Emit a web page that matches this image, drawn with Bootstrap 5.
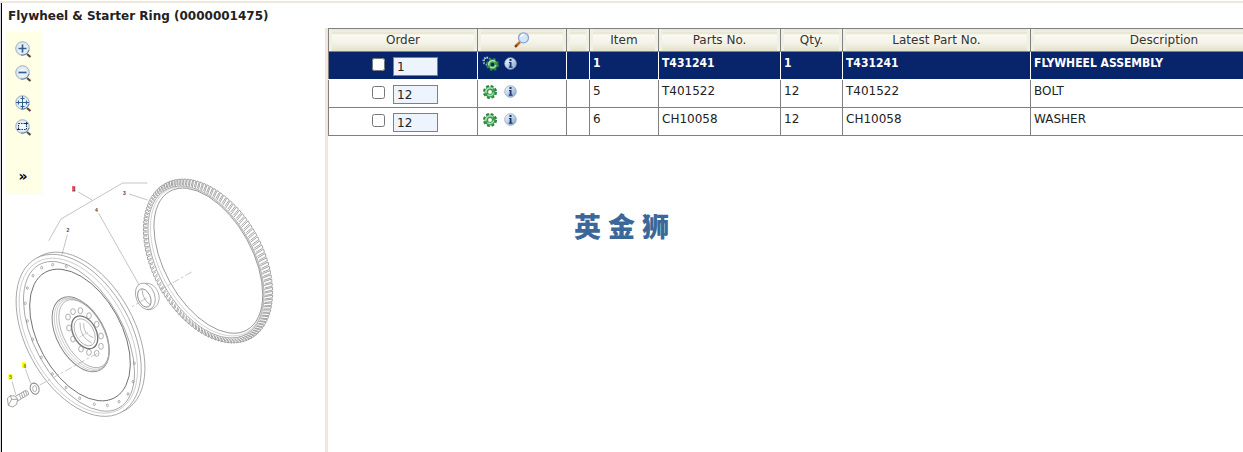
<!DOCTYPE html>
<html lang="en">
<head>
<meta charset="utf-8">
<meta name="viewport" content="width=device-width, initial-scale=1">
<title>Flywheel &amp; Starter Ring</title>
<link href="https://cdn.jsdelivr.net/npm/bootstrap@5.3.0/dist/css/bootstrap.min.css" rel="stylesheet">
<style>
body{font-family:"DejaVu Sans",Verdana,sans-serif;font-size:12px;line-height:16px;color:#222;background:#fff}
.page-shell{border-top:2px solid #efe8d6;margin-top:1px}
.frame-edge{border-left:1px solid #d8d8e0}
.frame-line{border-left:1px solid #000}
.page-title{font-size:12px;line-height:16px;padding:5px 6px 4px}
.diagram-pane{flex:0 0 323px}
.tool-strip{width:44px;padding:3px 3px 3px 4px;border:1px solid #fffff4;border-left:0}
.tool-list{background:#ffffe6;height:162px;padding:5px 0 0}
.tool-list button{width:34px;height:24px;padding:0;border:0;background:none;display:flex;align-items:center;justify-content:center;color:#000}
.tool-list .fit{margin-top:6px}
.tool-list .more{margin-top:25px;font-size:14px;font-weight:700;line-height:16px}
.splitter{flex:0 0 3px;background:#efe8d6}
.drawing{top:142px;left:-2px;width:323px}
.parts{table-layout:fixed;width:970px;border-collapse:collapse;margin:0}
.parts th,.parts td{border:1px solid #808080}
.parts th{height:23px;padding:0;text-align:center;font-weight:400;background:linear-gradient(#eeedde,#eeedde 3px,#e3e2cc 3px,#e3e2cc 4px,#fbfaf3 5px,#f4f3e8 60%,#e3e1ca);color:#333;box-shadow:inset 3px 0 #f1f0e4,inset -3px 0 #f1f0e4}
.parts td{height:28px;padding:3px;vertical-align:top}
.parts tbody tr:first-child td{background:#08246b;color:#fff;font-family:"DejaVu Sans Condensed","Noto Sans",sans-serif;font-weight:700;border-color:#fff;border-top-color:#808080}
.parts tbody tr:first-child td:first-child{border-left-color:#808080}
.parts td.order{padding:5px 0 0 43px}
.parts td.tools{padding:4px 0 0 4px}
.parts input[type=checkbox]{width:13px;height:13px;margin:1px 8px 0 0}
.qty{width:45px;height:19px;border:1px solid #808080;background:#edf4fe;padding:1px 3px 0;font:12px "DejaVu Sans",sans-serif;color:#222}
.icon-btn{border:0;padding:0;background:none;line-height:0}
.watermark{font:900 27px/30px "Noto Sans CJK SC",sans-serif;color:#3b6899;gap:7px;pointer-events:none}
</style>
</head>
<body class="vh-100 overflow-hidden d-flex flex-column">
<svg width="0" height="0" class="position-absolute" aria-hidden="true">
<defs>
<radialGradient id="glass"><stop offset="0" stop-color="#fff"/><stop offset="1" stop-color="#d5e3f0"/></radialGradient>
<linearGradient id="ball" x2="1" y2="1"><stop offset="0" stop-color="#fff"/><stop offset="1" stop-color="#7fa2cc"/></linearGradient>
<symbol id="lens" viewBox="0 0 17 17"><path d="M12 13l3.5 3" stroke="#544a43" stroke-width="2.2"/><circle cx="7.5" cy="7.5" r="6.8" fill="url(#glass)" stroke="#a3b0be"/><path d="M14 9a7 7 0 0 1-8 5" fill="none" stroke="#5f86ac"/></symbol>
<symbol id="gear" viewBox="0 0 14 14"><circle cx="7" cy="7" r="5.5" fill="none" stroke="#2c7d3e" stroke-width="3" stroke-dasharray="2.6 1.72"/><circle cx="7" cy="7" r="3.7" fill="none" stroke="#3d9a50" stroke-width="3.6"/><path d="M3 8a4.200 4.200 0 0 1 7-4M4.500 9.500a3.500 3.500 0 0 0 6-2" fill="none" stroke="#a4e3a6" stroke-width="1.5"/></symbol>
<symbol id="info" viewBox="0 0 13 13"><circle cx="6.5" cy="6.5" r="5.8" fill="url(#ball)" stroke="#8ca6c8" stroke-width=".8"/><path d="M5.500 2h2v2h-2zM5 5h2.500v4.500h1v1.200H4.800V9.500h.9V6H5z" fill="#17366d"/></symbol>
</defs>
</svg>
<div class="page-shell flex-grow-1 d-flex flex-column"><div class="frame-edge flex-grow-1 d-flex flex-column"><main class="frame-line flex-grow-1 d-flex flex-column">
<h1 class="page-title fw-bold m-0">Flywheel &amp; Starter Ring (0000001475)</h1>
<div class="d-flex flex-grow-1">
<section class="diagram-pane position-relative">
<div class="tool-strip"><div class="tool-list">
<button type="button" aria-label="Zoom in"><svg width="17" height="17"><use href="#lens"/><path d="M3.500 7.500h8M7.500 3.500v8" stroke="#31608e" stroke-width="1.7"/></svg></button>
<button type="button" aria-label="Zoom out"><svg width="17" height="17"><use href="#lens"/><path d="M3.500 7.500h8" stroke="#31608e" stroke-width="1.7"/></svg></button>
<button type="button" aria-label="Fit" class="fit"><svg width="17" height="17"><use href="#lens"/><path d="M1 7.500h13M7.500 1v13M3.500 5.500v4M11.500 5.500v4M5.500 3.500h4M5.500 11.500h4" stroke="#31608e"/></svg></button>
<button type="button" aria-label="Zoom area"><svg width="17" height="17"><use href="#lens"/><path d="M3.500 4.500h8v6h-8z" fill="none" stroke="#183665" stroke-dasharray="1.5 1"/><path d="M2 10.500h3M11.500 3v3M10 4.500h3" stroke="#183665"/></svg></button>
<button type="button" class="more" aria-label="More">»</button>
</div></div>
<svg class="drawing position-absolute pe-none" viewBox="0 0 969 846" fill="none" stroke="#8a8a8a" stroke-width="2" role="img" aria-label="Exploded view of flywheel and ring">
<g stroke="#b8b8b8" stroke-width="2.5"><path d="M146 212L183 147L368 39H442M235 66L278 91M387 72L443 90M296 130L417 344M202 194L186 254M36 634L48 676M76 596L92 640"/></g>
<g id="ring">
<path id="teeth" stroke="#777"/>
<ellipse cx="618" cy="276" rx="248" ry="144" transform="rotate(61 618 276)"/>
<ellipse cx="621" cy="274" rx="244" ry="139" stroke="#c4c4c4" transform="rotate(61 621 274)"/>
<ellipse cx="625" cy="272" rx="238" ry="132" stroke="#777" transform="rotate(61 625 272)"/>
</g>
<g id="collar"><path d="M436 340C465 336 485 374 475 397C470 413 455 422 440 418"/><ellipse cx="436" cy="379" rx="28" ry="41" transform="rotate(-20 436 379)"/><ellipse cx="433" cy="384" rx="18" ry="29" stroke="#666" transform="rotate(-24 433 384)"/><path d="M426 359Q429 391 452 405"/></g>
<g id="wheel">
<ellipse cx="249" cy="489" rx="264" ry="154" transform="rotate(61 249 489)" stroke="#888"/>
<ellipse cx="236" cy="496" rx="264" ry="157" transform="rotate(61 236 496)" fill="#fff"/>
<ellipse cx="235" cy="497" rx="253" ry="147" transform="rotate(61 235 497)" stroke="#bbb"/>
<ellipse cx="237" cy="499" rx="246" ry="133" transform="rotate(61 237 499)"/>
<ellipse cx="240" cy="495" rx="215" ry="125" transform="rotate(61 240 495)" stroke="#666" stroke-width="2.5"/>
<ellipse cx="242" cy="493" rx="122" ry="71" transform="rotate(61 242 493)" stroke="#888" stroke-width="3"/>
<ellipse cx="245" cy="493" rx="119" ry="67" transform="rotate(61 245 493)" stroke="#bbb"/>
<ellipse cx="248" cy="492" rx="116" ry="63" transform="rotate(61 248 492)" stroke="#bbb"/>
<ellipse cx="252" cy="491" rx="112" ry="60" transform="rotate(61 252 491)" stroke="#999"/>
<ellipse cx="254" cy="487" rx="53" ry="34" transform="rotate(61 254 487)" stroke="#777" stroke-width="4"/>
<ellipse cx="254" cy="487" rx="44" ry="27" transform="rotate(61 254 487)" stroke="#999"/>
<path d="M240 458Q238 500 275 519M251 460Q249 492 280 503" stroke="#999"/><path d="M238 502L264 487" stroke="#bbb"/>
<g id="holes"></g>
</g>
<path d="M575 306L477 362M440 384L396 410M292 550L107 652" stroke="#aaa" stroke-dasharray="22 7 8 7"/>
<ellipse cx="104" cy="656" rx="13" ry="17" transform="rotate(-20 104 656)" stroke="#888" stroke-width="3" fill="#fff"/><ellipse cx="104" cy="656" rx="6" ry="9"/>
<path d="M22 685L31 677L45 678L53 688L50 703L38 711L25 706ZM31 677L35 688L25 706M35 688L53 688M48 678L77 661Q86 663 86 673L53 693M58 673L63 686M64 670L69 683M70 666L75 679M76 663L81 675" stroke="#777" fill="#fff"/>
<g stroke="none"><path d="M216 48h10v17h-10z" fill="#ff6470"/><path d="M66 577h12v17h-12zM25 613h12v16h-12z" fill="#ffff00"/></g>
<g stroke="none" fill="#444" font-family="Liberation Sans, sans-serif" font-size="15" font-weight="700" text-anchor="middle"><text x="222" y="63">1</text><text x="373" y="76">3</text><text x="289" y="127">4</text><text x="204" y="186">2</text><text x="75" y="594" fill="#887800">6</text><text x="32" y="628" fill="#887800">5</text></g>
</svg>
</section>
<div class="splitter"></div>
<section class="flex-grow-1 overflow-hidden">
<table class="parts">
<colgroup><col style="width:149px"><col style="width:89px"><col style="width:23px"><col style="width:69px"><col style="width:122px"><col style="width:62px"><col style="width:188px"><col></colgroup>
<thead><tr><th>Order</th><th><svg width="16" height="16" aria-label="Search"><path d="M1.500 14.500L6 10" stroke="#c56a25" stroke-width="2.6"/><path d="M1 15l2-2" stroke="#713c18" stroke-width="2"/><circle cx="9.500" cy="5.800" r="5" fill="#d5e6fb" stroke="#8aa4d4" stroke-width="1.3"/><path d="M7 5a3 3 0 0 1 3-2.500" stroke="#fff" stroke-width="1.5" fill="none"/></svg></th><th></th><th>Item</th><th>Parts No.</th><th>Qty.</th><th>Latest Part No.</th><th>Description</th></tr></thead>
<tbody id="rows"></tbody>
</table>
</section>
</div>
</main></div></div>
<div class="watermark d-flex position-absolute top-50 start-50 translate-middle" lang="zh"><span>英</span><span>金</span><span>狮</span></div>
<script src="https://cdn.jsdelivr.net/npm/bootstrap@5.3.0/dist/js/bootstrap.bundle.min.js"></script>
<script>
const parts=[[1,'T431241',1,'FLYWHEEL ASSEMBLY'],[5,'T401522',12,'BOLT'],[6,'CH10058',12,'WASHER']];
const linked='<svg width="17" height="16"><circle cx="5" cy="5" r="3.6" fill="none" stroke="#86a7d0" stroke-width="2" stroke-dasharray="1.5 1.2"/><path d="M2 5a3 3 0 0 1 4-3" stroke="#d6e8d6" fill="none"/><use href="#gear" x="4" y="2" width="13" height="13"/></svg>';
const single='<svg width="17" height="16"><use href="#gear" x="1" y="1" width="14" height="14"/></svg>';
document.getElementById('rows').innerHTML=parts.map(([n,no,q,d],i)=>`<tr><td class="order"><div class="d-flex align-items-start"><input type="checkbox" aria-label="Select ${no}"><input class="qty" type="text" value="${q}" aria-label="Quantity of ${no}"></div></td><td class="tools"><div class="d-flex"><button type="button" class="icon-btn" aria-label="Open ${no}">${i?single:linked}</button><button type="button" class="icon-btn ms-1" aria-label="Details of ${no}"><svg width="16" height="16"><use href="#info" x="1" y="1" width="13" height="13"/></svg></button></div></td><td></td><td>${n}</td><td>${no}</td><td>${q}</td><td>${no}</td><td>${d}</td></tr>`).join('');
// gear teeth run between the front edge and the outer edge of the ring
const turn=61*Math.PI/180;
const at=(cx,cy,a,b,t)=>[cx+a*Math.cos(t)*Math.cos(turn)-b*Math.sin(t)*Math.sin(turn),cy+a*Math.cos(t)*Math.sin(turn)+b*Math.sin(t)*Math.cos(turn)].map(v=>v.toFixed(1));
let path='';const count=120;
for(let i=0;i<count;i++){const t=i*2*Math.PI/count,s=2*Math.PI/count;
path+=`M${at(618,276,249,146,t)}L${at(624,273,266,166,t-s*.4)}L${at(624,273,265,165,t+s*.3)}L${at(618,276,251,148,t+s*.6)}`;}
document.getElementById('teeth').setAttribute('d',path);
const big=[[219,425],[241,422],[267,437],[290,463],[303,498],[303,529],[290,550],[267,547],[243,537],[219,507],[207,474],[204,441]];
const small=[[158,284],[199,289],[125,293],[99,317],[82,354],[76,400],[82,453],[98,508],[124,562],[157,612],[198,653],[239,685],[283,703],[322,706],[357,695],[384,672],[399,635],[403,580]];
document.getElementById('holes').innerHTML=big.map(([x,y])=>`<ellipse cx="${x}" cy="${y}" rx="7" ry="9"/>`).join('')+small.map(([x,y])=>`<ellipse cx="${x}" cy="${y}" rx="3" ry="4"/>`).join('');
</script>
</body>
</html>
